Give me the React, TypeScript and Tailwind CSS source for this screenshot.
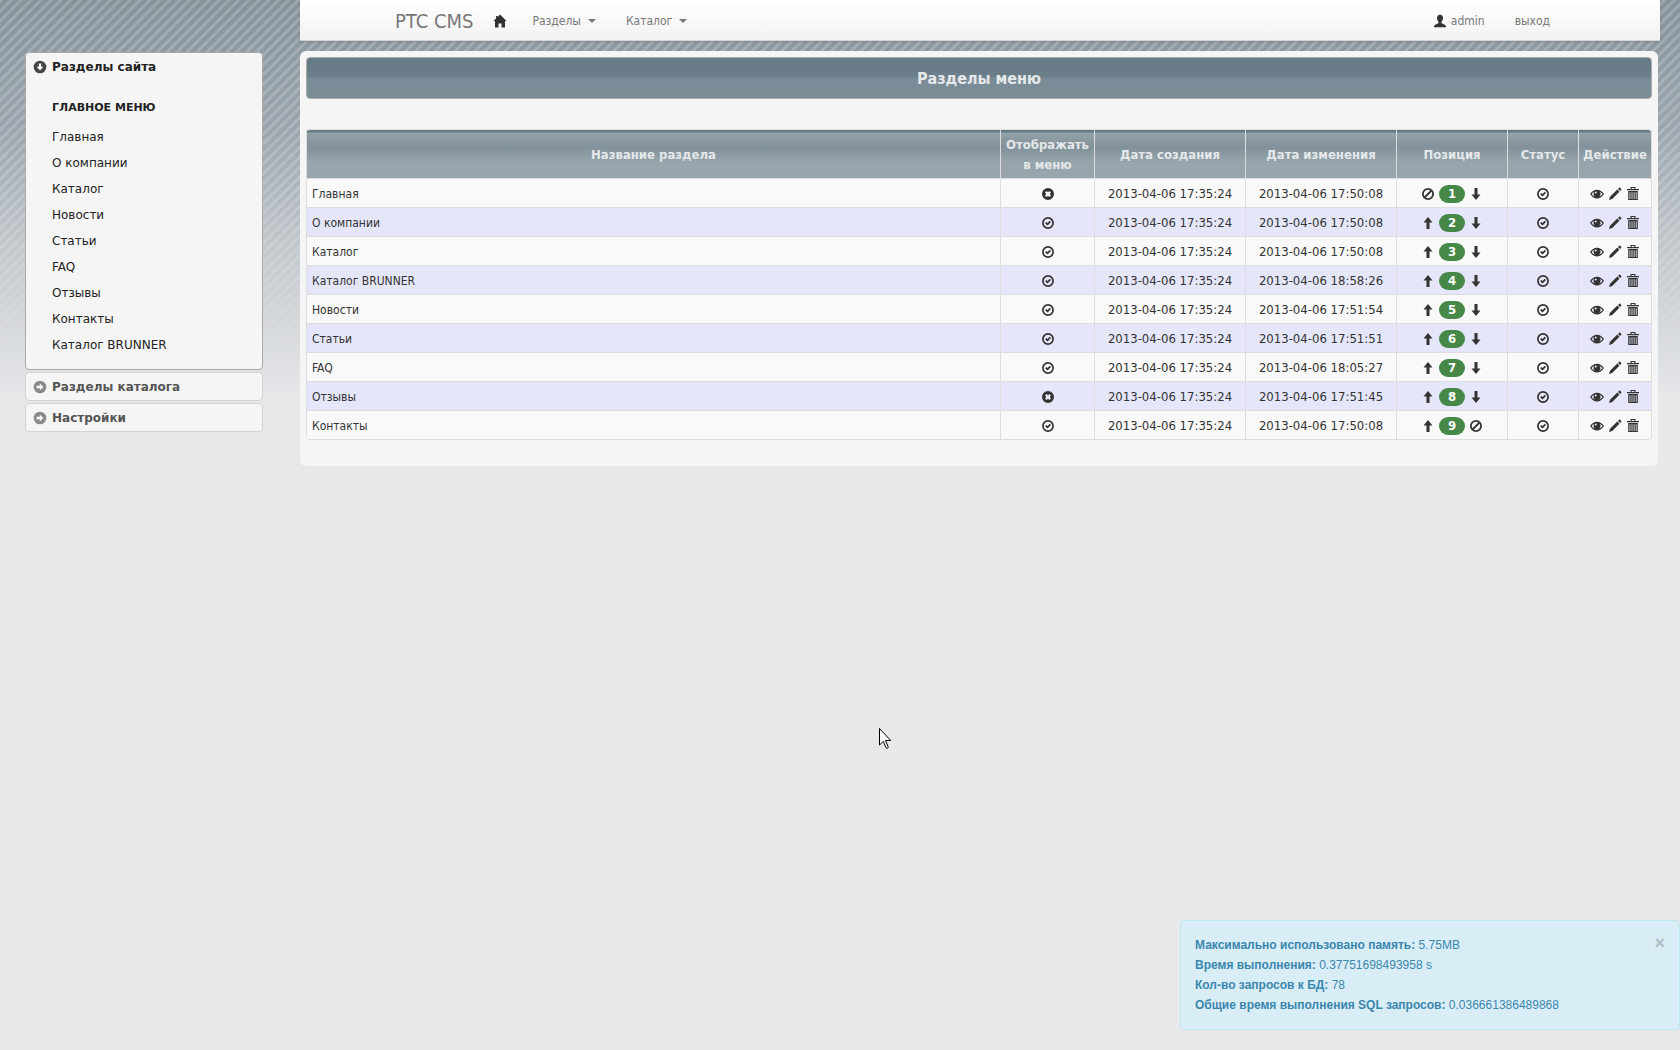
import type { ReactNode } from "react";

const siteSections = [
  "Главная",
  "О компании",
  "Каталог",
  "Новости",
  "Статьи",
  "FAQ",
  "Отзывы",
  "Контакты",
  "Каталог BRUNNER",
];

const rows = [
  { name: "Главная", inMenu: false, updated: "2013-04-06 17:50:08" },
  { name: "О компании", inMenu: true, updated: "2013-04-06 17:50:08" },
  { name: "Каталог", inMenu: true, updated: "2013-04-06 17:50:08" },
  { name: "Каталог BRUNNER", inMenu: true, updated: "2013-04-06 18:58:26" },
  { name: "Новости", inMenu: true, updated: "2013-04-06 17:51:54" },
  { name: "Статьи", inMenu: true, updated: "2013-04-06 17:51:51" },
  { name: "FAQ", inMenu: true, updated: "2013-04-06 18:05:27" },
  { name: "Отзывы", inMenu: false, updated: "2013-04-06 17:51:45" },
  { name: "Контакты", inMenu: true, updated: "2013-04-06 17:50:08" },
];

function Icon({ children }: { children: ReactNode }) {
  return (
    <svg
      viewBox="0 0 14 14"
      className="size-[14px] shrink-0"
      fill="currentColor"
      aria-hidden="true"
    >
      {children}
    </svg>
  );
}

const HomeIcon = () => (
  <Icon>
    <path d="M7 .5 13.6 7H12v6.5H8.5V9.5h-3v4H2V7H.4L3 4.4V2h1.5v1z" />
  </Icon>
);

const UserIcon = () => (
  <Icon>
    <path d="M7 .8c2 0 3 1.300 3 3.200 0 1.500-.7 3-1.500 3.800v1.200c.3.900 4.500 1.300 4.500 3.500v.7H1v-.7c0-2.200 4.200-2.600 4.500-3.500V7.800C4.700 7 4 5.500 4 4 4 2.100 5 .8 7 .8z" />
  </Icon>
);

const OkCircleIcon = () => (
  <Icon>
    <circle cx="7" cy="7" r="5.100" fill="none" stroke="currentColor" strokeWidth="1.700" />
    <path d="m4.100 7.200 1.200-1.200 1.200 1.100 2.300-2.400L10 5.900 6.500 9.500z" />
  </Icon>
);

const RemoveIcon = () => (
  <Icon>
    <path
      fillRule="evenodd"
      d="M7 1a6 6 0 1 1 0 12A6 6 0 0 1 7 1zM5.600 4 4 5.600 5.300 7 4 8.400 5.600 10 7 8.700 8.400 10 10 8.400 8.700 7 10 5.600 8.400 4 7 5.300z"
    />
  </Icon>
);

const BanIcon = () => (
  <Icon>
    <g fill="none" stroke="currentColor" strokeWidth="1.800">
      <circle cx="7" cy="7" r="5.100" />
      <path d="m3.500 10.500 7-7" />
    </g>
  </Icon>
);

const ArrowUpIcon = () => (
  <Icon>
    <path d="M7 1 11.500 6.500H8.500V13h-3V6.500h-3z" />
  </Icon>
);

const ArrowDownIcon = () => (
  <Icon>
    <path d="M7 13 2.500 7.500h3V1h3v6.500h3z" />
  </Icon>
);

const EyeIcon = () => (
  <Icon>
    <path
      fillRule="evenodd"
      d="M0 7c1.700-2.700 4.200-4.300 7-4.300S12.300 4.300 14 7c-1.700 2.700-4.200 4.500-7 4.500S1.700 9.700 0 7zm1.500 0c1 1.400 2.200 2.300 3.600 2.600a3.300 3.300 0 0 1-.8-4.700C3.200 5.400 2.200 6 1.500 7zm8.200-2.100a3.300 3.300 0 0 1-.8 4.700c1.400-.3 2.600-1.200 3.600-2.600-.7-1-1.700-1.600-2.800-2.100zM6 4.600a1 1 0 0 0-.9 1.700 1 1 0 0 0 1.500-1.200z"
    />
  </Icon>
);

const PencilIcon = () => (
  <Icon>
    <path d="m1 13 1-3.200L9.300 2.600l2.100 2.100-7.200 7.300zM10 1.900l1-1c.4-.4.900-.4 1.300 0l.8.800c.4.400.4.900 0 1.300l-1 1z" />
  </Icon>
);

const TrashIcon = () => (
  <Icon>
    <path fillRule="evenodd" d="M4.500 0h5v2H13v1.200H1V2h3.500zm1.100 1v1h2.800V1z" />
    <path
      fillRule="evenodd"
      d="M2.200 4h9.600v9H2.200zm1.300 1.200V12h.8V5.200zm2.100 0V12h.8V5.200zm2.100 0V12h.8V5.200zm2.100 0V12h.8V5.200z"
    />
  </Icon>
);

const CircleArrowDownIcon = () => (
  <Icon>
    <circle cx="7" cy="7" r="6.300" />
    <path d="M5.800 3.500h2.400v3.300h2.300L7 10.500 3.500 6.800h2.300z" fill="#f5f5f5" />
  </Icon>
);

const CircleArrowRightIcon = () => (
  <Icon>
    <circle cx="7" cy="7" r="6.300" />
    <path d="M3.500 5.800h3.300V3.500L10.500 7l-3.700 3.500V8.200H3.500z" fill="#f5f5f5" />
  </Icon>
);

function IconButton({ label, children }: { label: string; children: ReactNode }) {
  return (
    <button type="button" aria-label={label} className="block cursor-pointer">
      {children}
    </button>
  );
}

function Caret() {
  return (
    <span className="border-x-4 border-t-4 border-x-transparent border-t-[#777]" />
  );
}

function Navbar() {
  return (
    <nav className="mr-5 flex h-[41px] items-center border-b border-[#d4d4d4] bg-linear-to-b from-white to-[#f2f2f2] pt-px pr-[110px] pl-[95px] text-[12px] text-[#777] shadow-sm">
      <a href="#" className="text-xl">
        PTC CMS
      </a>
      <a href="#" aria-label="home" className="ml-5 text-[#333]">
        <HomeIcon />
      </a>
      <button type="button" className="ml-[25px] flex items-center gap-[7px]">
        Разделы
        <Caret />
      </button>
      <button type="button" className="ml-[30px] flex items-center gap-[7px]">
        Каталог
        <Caret />
      </button>
      <a href="#" className="ml-auto flex items-center gap-1">
        <span className="text-[#333]">
          <UserIcon />
        </span>
        admin
      </a>
      <a href="#" className="ml-[30px]">
        выход
      </a>
    </nav>
  );
}

function Sidebar() {
  return (
    <aside className="w-[300px] shrink-0 pt-[52px] pr-[37px] pl-[25px] font-['DejaVu_Sans'] text-[12px] text-[#222]">
      <section className="rounded-[4px] border border-[#aaa] bg-[#f5f5f5] pb-[11px]">
        <h2>
          <button
            type="button"
            className="flex h-[28px] items-center gap-[5px] pl-[7px] font-bold"
          >
            <span className="text-[#444]">
              <CircleArrowDownIcon />
            </span>
            Разделы сайта
          </button>
        </h2>
        <h3 className="mt-[17px] pl-[26px] text-[11px] leading-5 font-bold">
          ГЛАВНОЕ МЕНЮ
        </h3>
        <ul className="mt-[6px] pl-[26px]">
          {siteSections.map((name) => (
            <li key={name} className="leading-[26px]">
              <a href="#">{name}</a>
            </li>
          ))}
        </ul>
      </section>
      {["Разделы каталога", "Настройки"].map((title) => (
        <h2
          key={title}
          className="mt-[2px] rounded-[4px] border border-[#d3d3d3] bg-[#f5f5f5]"
        >
          <button
            type="button"
            className="flex h-[27px] items-center gap-[5px] pl-[7px] font-bold text-[#555]"
          >
            <span className="text-[#888]">
              <CircleArrowRightIcon />
            </span>
            {title}
          </button>
        </h2>
      ))}
    </aside>
  );
}

function SectionsTable() {
  return (
    <table className="w-full border-separate border-spacing-0 overflow-hidden rounded-[4px] border border-l-0 border-[#ddd] text-center text-[13px] leading-5 text-[#333]">
      <thead className="text-[#e6e8ea]">
        <tr className="[&>th]:border-l [&>th]:border-[#ddd] [&>th]:bg-linear-[to_bottom,#667a86_0px,#667a86_2px,#93a1a8_3px,#82929a_17px,#98a5ac_33px,#98a5ac] [&>th]:px-1 [&>th]:pt-[5px] [&>th]:pb-[3px]">
          <th>Название раздела</th>
          <th className="w-[94px]">Отображать в меню</th>
          <th className="w-[151px]">Дата создания</th>
          <th className="w-[151px]">Дата изменения</th>
          <th className="w-[111px]">Позиция</th>
          <th className="w-[71px]">Статус</th>
          <th className="w-[73px]">Действие</th>
        </tr>
      </thead>
      <tbody>
        {rows.map((row, i) => (
          <tr
            key={row.name}
            className="bg-[#f9f9f9] even:bg-[#e6e6fa] [&>td]:border-t [&>td]:border-l [&>td]:border-[#ddd] [&>td]:px-[5px] [&>td]:pt-[5px] [&>td]:pb-[3px]"
          >
            <td className="text-left text-[12px] leading-5">{row.name}</td>
            <td>
              <div className="flex justify-center">
                <IconButton label="в меню">
                  {row.inMenu ? <OkCircleIcon /> : <RemoveIcon />}
                </IconButton>
              </div>
            </td>
            <td>2013-04-06 17:35:24</td>
            <td>{row.updated}</td>
            <td>
              <div className="flex items-center justify-center gap-1">
                <IconButton label="вверх">
                  {i === 0 ? <BanIcon /> : <ArrowUpIcon />}
                </IconButton>
                <span className="h-[18px] w-[26px] rounded-full bg-[#468847] text-[13px] leading-[18px] font-bold text-white">
                  {i + 1}
                </span>
                <IconButton label="вниз">
                  {i === rows.length - 1 ? <BanIcon /> : <ArrowDownIcon />}
                </IconButton>
              </div>
            </td>
            <td>
              <div className="flex justify-center">
                <IconButton label="статус">
                  <OkCircleIcon />
                </IconButton>
              </div>
            </td>
            <td>
              <div className="flex justify-center gap-1">
                <IconButton label="просмотр">
                  <EyeIcon />
                </IconButton>
                <IconButton label="изменить">
                  <PencilIcon />
                </IconButton>
                <IconButton label="удалить">
                  <TrashIcon />
                </IconButton>
              </div>
            </td>
          </tr>
        ))}
      </tbody>
    </table>
  );
}

function DebugAlert() {
  return (
    <div className="fixed right-0 bottom-5 flex w-[500px] items-start justify-between rounded-[4px] border border-[#bce8f1] bg-[#d9edf7] p-[14px] font-['Liberation_Sans'] text-[12px] leading-5 text-[#3a87ad]">
      <div>
        <p>
          <b>Максимально использовано память:</b> 5.75MB
        </p>
        <p>
          <b>Время выполнения:</b> 0.37751698493958 s
        </p>
        <p>
          <b>Кол-во запросов к БД:</b> 78
        </p>
        <p>
          <b>Общие время выполнения SQL запросов:</b> 0.036661386489868
        </p>
      </div>
      <button type="button" className="text-lg leading-4 font-bold text-[#adbec6]">
        ×
      </button>
    </div>
  );
}

export default function App() {
  return (
    <div className="relative min-h-screen bg-[#e6e8ea] font-['DejaVu_Sans_Condensed']">
      {/* striped header backdrop, fades into the page colour */}
      <div className="absolute inset-x-0 top-0 h-[400px] bg-linear-[to_bottom,#86939b,#9ba5ae_32%,#c3c8cc_62%,#e6e8ea]" />
      <div className="absolute inset-x-0 top-0 h-[400px] bg-[repeating-linear-gradient(135deg,#ffffff30_0px,#ffffff30_2px,transparent_3px,transparent_6px,#ffffff30_7px)] mask-b-from-50%" />

      <div className="relative flex">
        <Sidebar />
        <div className="min-w-0 flex-1">
          <Navbar />
          <main className="mt-[10px] mr-[22px] rounded-[6px] bg-[#f5f5f5] px-[6px] pt-[6px] pb-[26px]">
            <h1 className="mb-[30px] rounded-[4px] border border-[#aaa] bg-linear-[to_bottom,#667a86_0%,#6b7e8a_45%,#788b96_52%,#7b8e98] pt-px text-center text-base leading-[39px] font-bold text-[#e6e8ea]">
              Разделы меню
            </h1>
            <SectionsTable />
          </main>
        </div>
      </div>

      <DebugAlert />

      {/* mouse pointer */}
      <svg
        viewBox="0 0 13 22"
        className="absolute top-[728px] left-[879px] h-[22px] w-[13px]"
        aria-hidden="true"
      >
        <path
          d="M.5.500v16.500l3.800-3.700 2.700 6.500c.5 1 2.500.4 2.200-.9l-2.700-6.400h5.200z"
          fill="#fff"
          stroke="#000"
        />
      </svg>
    </div>
  );
}
